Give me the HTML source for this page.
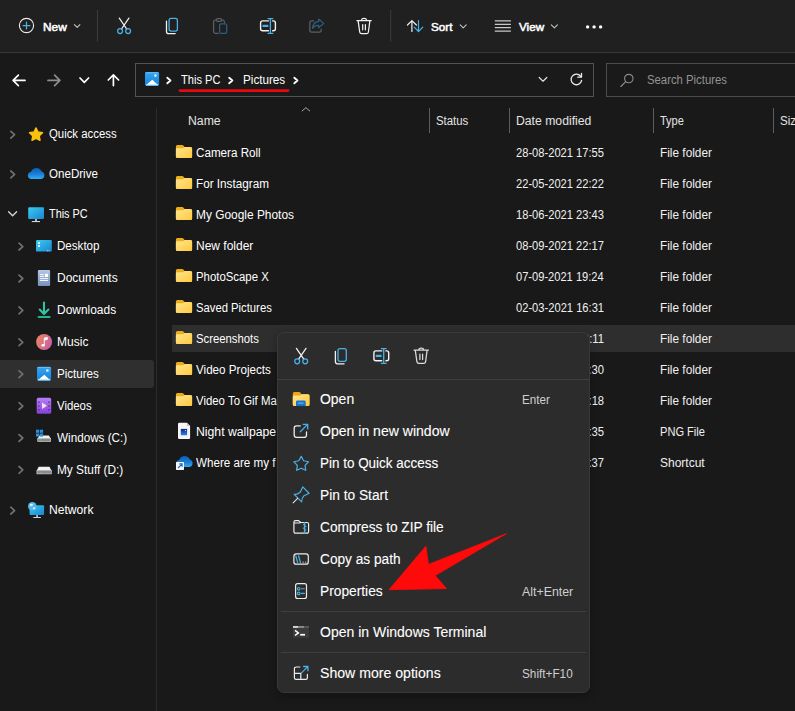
<!DOCTYPE html>
<html><head><meta charset="utf-8"><title>Pictures</title>
<style>
*{box-sizing:border-box;margin:0;padding:0}
html,body{width:795px;height:711px;overflow:hidden;background:#191919;font-family:"Liberation Sans",sans-serif;color:#fff}
body{position:relative}
.t{position:absolute;white-space:pre;line-height:1;transform-origin:0 0}
.box{position:absolute}
svg.ov{position:absolute;left:0;top:0;width:795px;height:711px;overflow:hidden}
#toolbar{left:0;top:0;width:795px;height:52px;background:#202020}
#tbline{left:0;top:52px;width:795px;height:1px;background:#383838}
#addr{left:135px;top:63px;width:459px;height:34px;border:1px solid #535353;background:#1a1a1a}
#search{left:606px;top:63px;width:200px;height:34px;border:1px solid #4d4d4d;background:#1a1a1a}
#sidesel{left:0;top:360px;width:154px;height:28px;background:#2f2f2f;border-radius:0 3px 3px 0}
#sideline{left:156px;top:108px;width:1px;height:603px;background:#2b2b2b}
#selrow{left:172px;top:325px;width:630px;height:27px;background:#2e2e2e}
.cs{position:absolute;top:108px;width:1px;height:25px;background:#5c5c5c}
#menu{left:277px;top:332px;width:313px;height:361px;background:#2c2c2c;border:1px solid #393939;border-radius:7px;box-shadow:0 3px 8px rgba(0,0,0,.28)}
.ms{position:absolute;left:281px;width:305px;height:1px;background:#3f3f3f}
</style></head><body>
<div class="box" id="toolbar"></div><div class="box" id="tbline"></div>
<div class="box" id="addr"></div><div class="box" id="search"></div>
<div class="box" id="sidesel"></div><div class="box" id="sideline"></div>
<div class="box" id="selrow"></div>
<div class="cs" style="left:429px"></div><div class="cs" style="left:509px"></div><div class="cs" style="left:653px"></div><div class="cs" style="left:773px"></div>
<span class="t" style="left:43.00px;top:22px;font-size:11px;color:#ffffff;-webkit-text-stroke:0.5px #ffffff;transform:scaleX(1.0814)">New</span>
<span class="t" style="left:431.00px;top:22px;font-size:11px;color:#ffffff;-webkit-text-stroke:0.5px #ffffff;transform:scaleX(1.0628)">Sort</span>
<span class="t" style="left:519.00px;top:22px;font-size:11px;color:#ffffff;-webkit-text-stroke:0.5px #ffffff;transform:scaleX(1.0601)">View</span>
<span class="t" style="left:181.00px;top:74px;font-size:12px;color:#ffffff;transform:scaleX(0.9231)">This PC</span>
<span class="t" style="left:243.00px;top:74px;font-size:12px;color:#ffffff;transform:scaleX(0.9736)">Pictures</span>
<span class="t" style="left:647.00px;top:74px;font-size:12px;color:#939393;transform:scaleX(0.9442)">Search Pictures</span>
<span class="t" style="left:188.00px;top:115px;font-size:12px;color:#e4e4e4;transform:scaleX(1.0212)">Name</span>
<span class="t" style="left:436.00px;top:115px;font-size:12px;color:#e4e4e4;transform:scaleX(0.9479)">Status</span>
<span class="t" style="left:516.00px;top:115px;font-size:12px;color:#e4e4e4;transform:scaleX(1.0176)">Date modified</span>
<span class="t" style="left:660.00px;top:115px;font-size:12px;color:#e4e4e4;transform:scaleX(0.9171)">Type</span>
<span class="t" style="left:780.00px;top:115px;font-size:12px;color:#e4e4e4;transform:scaleX(0.9681)">Size</span>
<span class="t" style="left:49.00px;top:128px;font-size:12px;color:#ffffff;transform:scaleX(0.9472)">Quick access</span>
<span class="t" style="left:49.00px;top:168px;font-size:12px;color:#ffffff;transform:scaleX(0.9654)">OneDrive</span>
<span class="t" style="left:49.00px;top:208px;font-size:12px;color:#ffffff;transform:scaleX(0.9049)">This PC</span>
<span class="t" style="left:57.00px;top:240px;font-size:12px;color:#ffffff;transform:scaleX(0.9657)">Desktop</span>
<span class="t" style="left:57.00px;top:272px;font-size:12px;color:#ffffff;transform:scaleX(0.9995)">Documents</span>
<span class="t" style="left:57.00px;top:304px;font-size:12px;color:#ffffff;transform:scaleX(0.9958)">Downloads</span>
<span class="t" style="left:57.00px;top:336px;font-size:12px;color:#ffffff;transform:scaleX(1.0034)">Music</span>
<span class="t" style="left:57.00px;top:368px;font-size:12px;color:#ffffff;transform:scaleX(0.9655)">Pictures</span>
<span class="t" style="left:57.00px;top:400px;font-size:12px;color:#ffffff;transform:scaleX(0.9503)">Videos</span>
<span class="t" style="left:57.00px;top:432px;font-size:12px;color:#ffffff;transform:scaleX(0.9752)">Windows (C:)</span>
<span class="t" style="left:57.00px;top:464px;font-size:12px;color:#ffffff;transform:scaleX(0.9877)">My Stuff (D:)</span>
<span class="t" style="left:49.00px;top:504px;font-size:12px;color:#ffffff;transform:scaleX(1.0098)">Network</span>
<span class="t" style="left:196.00px;top:147px;font-size:12px;color:#ffffff;transform:scaleX(0.9703)">Camera Roll</span>
<span class="t" style="left:516.00px;top:147px;font-size:12px;color:#f0f0f0;transform:scaleX(0.9288)">28-08-2021 17:55</span>
<span class="t" style="left:660.00px;top:147px;font-size:12px;color:#f0f0f0;transform:scaleX(0.9860)">File folder</span>
<span class="t" style="left:196.00px;top:178px;font-size:12px;color:#ffffff;transform:scaleX(0.9760)">For Instagram</span>
<span class="t" style="left:516.00px;top:178px;font-size:12px;color:#f0f0f0;transform:scaleX(0.9279)">22-05-2021 22:22</span>
<span class="t" style="left:660.00px;top:178px;font-size:12px;color:#f0f0f0;transform:scaleX(0.9860)">File folder</span>
<span class="t" style="left:196.00px;top:209px;font-size:12px;color:#ffffff;transform:scaleX(0.9928)">My Google Photos</span>
<span class="t" style="left:516.00px;top:209px;font-size:12px;color:#f0f0f0;transform:scaleX(0.9287)">18-06-2021 23:43</span>
<span class="t" style="left:660.00px;top:209px;font-size:12px;color:#f0f0f0;transform:scaleX(0.9860)">File folder</span>
<span class="t" style="left:196.00px;top:240px;font-size:12px;color:#ffffff;transform:scaleX(1.0001)">New folder</span>
<span class="t" style="left:516.00px;top:240px;font-size:12px;color:#f0f0f0;transform:scaleX(0.9279)">08-09-2021 22:17</span>
<span class="t" style="left:660.00px;top:240px;font-size:12px;color:#f0f0f0;transform:scaleX(0.9860)">File folder</span>
<span class="t" style="left:196.00px;top:271px;font-size:12px;color:#ffffff;transform:scaleX(0.9484)">PhotoScape X</span>
<span class="t" style="left:516.00px;top:271px;font-size:12px;color:#f0f0f0;transform:scaleX(0.9253)">07-09-2021 19:24</span>
<span class="t" style="left:660.00px;top:271px;font-size:12px;color:#f0f0f0;transform:scaleX(0.9860)">File folder</span>
<span class="t" style="left:196.00px;top:302px;font-size:12px;color:#ffffff;transform:scaleX(0.9389)">Saved Pictures</span>
<span class="t" style="left:516.00px;top:302px;font-size:12px;color:#f0f0f0;transform:scaleX(0.9294)">02-03-2021 16:31</span>
<span class="t" style="left:660.00px;top:302px;font-size:12px;color:#f0f0f0;transform:scaleX(0.9860)">File folder</span>
<span class="t" style="left:196.00px;top:333px;font-size:12px;color:#ffffff;transform:scaleX(0.9431)">Screenshots</span>
<span class="t" style="left:516.00px;top:333px;font-size:12px;color:#f0f0f0;transform:scaleX(0.9370)">09-09-2021 12:11</span>
<span class="t" style="left:660.00px;top:333px;font-size:12px;color:#f0f0f0;transform:scaleX(0.9860)">File folder</span>
<span class="t" style="left:196.00px;top:364px;font-size:12px;color:#ffffff;transform:scaleX(0.9702)">Video Projects</span>
<span class="t" style="left:516.00px;top:364px;font-size:12px;color:#f0f0f0;transform:scaleX(0.9367)">11-07-2021 20:30</span>
<span class="t" style="left:660.00px;top:364px;font-size:12px;color:#f0f0f0;transform:scaleX(0.9860)">File folder</span>
<span class="t" style="left:196.00px;top:395px;font-size:12px;color:#ffffff;transform:scaleX(0.9504)">Video To Gif Ma</span>
<span class="t" style="left:516.00px;top:395px;font-size:12px;color:#f0f0f0;transform:scaleX(0.9295)">05-08-2021 15:18</span>
<span class="t" style="left:660.00px;top:395px;font-size:12px;color:#f0f0f0;transform:scaleX(0.9860)">File folder</span>
<span class="t" style="left:196.00px;top:426px;font-size:12px;color:#ffffff;transform:scaleX(1.0181)">Night wallpape</span>
<span class="t" style="left:516.00px;top:426px;font-size:12px;color:#f0f0f0;transform:scaleX(0.9380)">09-09-2021 11:35</span>
<span class="t" style="left:660.00px;top:426px;font-size:12px;color:#f0f0f0;transform:scaleX(0.9237)">PNG File</span>
<span class="t" style="left:196.00px;top:457px;font-size:12px;color:#ffffff;transform:scaleX(0.9693)">Where are my f</span>
<span class="t" style="left:516.00px;top:457px;font-size:12px;color:#f0f0f0;transform:scaleX(0.9279)">24-07-2021 18:37</span>
<span class="t" style="left:660.00px;top:457px;font-size:12px;color:#f0f0f0;transform:scaleX(0.9998)">Shortcut</span>
<svg class="ov" viewBox="0 0 795 711">
<defs>
<linearGradient id="gFold" x1="0" y1="0" x2="1" y2="1"><stop offset="0" stop-color="#ffe58f"/><stop offset="1" stop-color="#ffc93f"/></linearGradient>
<linearGradient id="gPic" x1="0" y1="0" x2="0" y2="1"><stop offset="0" stop-color="#38a6f2"/><stop offset="1" stop-color="#1680d8"/></linearGradient>
<linearGradient id="gMon" x1="0" y1="0" x2="1" y2="1"><stop offset="0" stop-color="#3accf0"/><stop offset="1" stop-color="#1a84d2"/></linearGradient>
<linearGradient id="gDoc" x1="0" y1="0" x2="0" y2="1"><stop offset="0" stop-color="#b4c7e6"/><stop offset="1" stop-color="#7690be"/></linearGradient>
<linearGradient id="gMus" x1="0" y1="0" x2="1" y2="0.4"><stop offset="0" stop-color="#ee8a56"/><stop offset="1" stop-color="#cc60a2"/></linearGradient>
<linearGradient id="gVid" x1="0" y1="0" x2="0" y2="1"><stop offset="0" stop-color="#b880f6"/><stop offset="1" stop-color="#8640d2"/></linearGradient>
<linearGradient id="gCloud" x1="0" y1="0" x2="0" y2="1"><stop offset="0" stop-color="#0f5db4"/><stop offset="0.55" stop-color="#1a7ed6"/><stop offset="1" stop-color="#35aef2"/></linearGradient>
<linearGradient id="gImg" x1="0" y1="0" x2="0" y2="1"><stop offset="0" stop-color="#0a2688"/><stop offset="1" stop-color="#3088ea"/></linearGradient>
<linearGradient id="gDl" x1="0" y1="0" x2="0" y2="1"><stop offset="0" stop-color="#3bd0ae"/><stop offset="1" stop-color="#1fae8a"/></linearGradient>
<g id="iFolder">
<path d="M0 1.5Q0 0 1.5 0H6.2Q7 0 7.5.6L8.6 2.1H14.7Q16.2 2.1 16.2 3.6V11.7Q16.2 13.2 14.7 13.2H1.5Q0 13.2 0 11.7Z" fill="#ecae18"/>
<path d="M0 4.5Q0 3.4 1.1 3.4H6.5Q7.2 3.4 7.7 3L8.7 2.1H14.7Q16.2 2.1 16.2 3.6V11.7Q16.2 13.2 14.7 13.2H1.5Q0 13.2 0 11.7Z" fill="url(#gFold)"/>
</g>
<g id="iPic">
<rect x="0" y="0" width="14.1" height="14" rx="1.6" fill="url(#gPic)"/>
<rect x="0.4" y="0.3" width="13.3" height="1" rx=".5" fill="#6cc6f8" opacity=".8"/>
<path d="M1.1 13.1L7.3 7.9L13.1 13.1Z" fill="#fff"/>
<rect x="0.8" y="12.5" width="12.5" height="1.1" rx=".4" fill="#a6e8ff"/>
<circle cx="10.4" cy="3.7" r="1.3" fill="#d4f3ff"/>
</g>
<g id="iScis" fill="none" stroke-width="1.25" stroke-linecap="round">
<path d="M119.3 18.1L126.7 29M128.9 18.1L121.5 29" stroke="#f2f2f2"/>
<circle cx="120.1" cy="31.1" r="2.45" stroke="#4ab1e6"/><circle cx="128.1" cy="31.1" r="2.45" stroke="#4ab1e6"/>
</g>
<g id="iCopy" fill="none" stroke-width="1.3" stroke-linecap="round">
<path d="M166.5 21.2V31.4a2.2 2.2 0 0 0 2.2 2.2H175.2" stroke="#f2f2f2"/>
<rect x="169.1" y="18.4" width="8.3" height="12.7" rx="2" stroke="#4ab1e6"/>
</g>
<g id="iRen" fill="none" stroke-linecap="round">
<path d="M268.4 20.9H262.6a2 2 0 0 0-2 2V28.8a2 2 0 0 0 2 2H268.4M272.6 20.9H273.4a2 2 0 0 1 2 2V28.8a2 2 0 0 1-2 2H272.6" stroke="#f2f2f2" stroke-width="1.4"/>
<path d="M270.4 18.7V33.3M268.1 18.6H272.8M268.1 33.4H272.8" stroke="#4ab1e6" stroke-width="1.3"/>
<path d="M262.5 25.9H268.3" stroke="#4ab1e6" stroke-width="2.2" stroke-linecap="butt"/>
</g>
<g id="iTrash" fill="none" stroke-width="1.25" stroke-linecap="round" stroke-linejoin="round">
<path d="M356.9 20.5H371.2M361.4 20.3a2.7 2.3 0 0 1 5.3 0M358.1 20.7L359.7 32a2 2 0 0 0 2 1.7H366.4a2 2 0 0 0 2-1.7L369.9 20.7M362.7 24.5V29.8M365.4 24.5V29.8"/>
</g>
<path id="pCloud" d="M31.5 179C29.3 179 27.8 177.4 27.8 175.5C27.8 173.6 29.2 172.2 31 172C31.8 169.6 33.9 168 36.4 168C38.8 168 40.8 169.4 41.6 171.5C43.3 171.8 44.4 173.3 44.4 175.2C44.4 177.3 42.8 179 40.7 179Z"/>
</defs>
<circle cx="26.5" cy="25.5" r="7.1" fill="none" stroke="#ececec" stroke-width="1.1"/>
<path d="M23.1 25.5H29.9M26.5 22.1V28.9" stroke="#4ab1e6" stroke-width="1.25" stroke-linecap="round"/>
<polyline points="74.4,24.7 77.15,27.4 79.9,24.7" fill="none" stroke="#c4c4c4" stroke-width="1.1" stroke-linecap="round" stroke-linejoin="round"/>
<rect x="97" y="10" width="1" height="31.5" fill="#3c3c3c"/>
<use href="#iScis"/>
<use href="#iCopy"/>
<g fill="none" stroke-width="1.25" stroke-linecap="round"><path d="M218.3 33.3H215.4a1.8 1.8 0 0 1-1.8-1.8V21.9a1.8 1.8 0 0 1 1.8-1.8H216.4M221.6 20.1H222.6a1.8 1.8 0 0 1 1.8 1.8V22.4" stroke="#5e5e5e"/><rect x="216.4" y="18.6" width="5.2" height="2.8" rx="1.3" stroke="#5e5e5e"/><rect x="219.6" y="23.9" width="7.1" height="9.5" rx="1.6" stroke="#295f80"/></g>
<use href="#iRen"/>
<g fill="none" stroke-width="1.25" stroke-linecap="round" stroke-linejoin="round"><path d="M313.6 20.9H311.7a1.9 1.9 0 0 0-1.9 1.9V30.3a1.9 1.9 0 0 0 1.9 1.9H319.3a1.9 1.9 0 0 0 1.9-1.9V29.2" stroke="#5e5e5e"/><path d="M318.7 19L323.7 23.4L318.7 27.8V25.4C315.6 25.2 313.7 26.2 312.4 28.4C312.7 24.6 314.9 21.9 318.7 21.4Z" stroke="#295f80"/></g>
<use href="#iTrash" stroke="#f2f2f2"/>
<rect x="390.2" y="10" width="1" height="31.5" fill="#3c3c3c"/>
<g fill="none" stroke-width="1.2" stroke-linecap="round" stroke-linejoin="round"><path d="M411.9 31.5V20.9M407.5 25L411.9 20.6L416.4 25" stroke="#f2f2f2"/><path d="M418.5 20.6V31.3M414.2 27.2L418.5 31.5L422.8 27.2" stroke="#4ab1e6"/></g>
<polyline points="460.2,24.9 463.2,27.8 466.2,24.9" fill="none" stroke="#c4c4c4" stroke-width="1.1" stroke-linecap="round" stroke-linejoin="round"/>
<path d="M494.8 20.9H510.9M494.8 24.3H510.9M494.8 27.7H510.9M494.8 31.1H510.9" stroke="#f2f2f2" stroke-width="1"/>
<polyline points="551.3,24.9 554.3499999999999,27.8 557.4,24.9" fill="none" stroke="#c4c4c4" stroke-width="1.1" stroke-linecap="round" stroke-linejoin="round"/>
<circle cx="587.6" cy="26.9" r="1.7" fill="#fff"/><circle cx="594.1" cy="26.9" r="1.7" fill="#fff"/><circle cx="600.6" cy="26.9" r="1.7" fill="#fff"/>
<g fill="none" stroke-width="1.7" stroke-linecap="round" stroke-linejoin="round"><path d="M25 80.4H13.3M18.4 75.2L13.1 80.4L18.4 85.6" stroke="#fff"/><path d="M48 80.4H59.7M54.6 75.2L59.9 80.4L54.6 85.6" stroke="#8e8e8e"/><path d="M80 78L84.3 82.3L88.6 78" stroke="#fff"/><path d="M113.4 85.6V75.1M108.3 80L113.4 74.9L118.6 80" stroke="#fff"/></g>
<use href="#iPic" x="145" y="71.9"/>
<polyline points="167.3,77.7 170.5,80.5 167.3,83.3" fill="none" stroke="#fff" stroke-width="1.8" stroke-linecap="round" stroke-linejoin="round"/>
<polyline points="229.20000000000002,77.7 232.4,80.5 229.20000000000002,83.3" fill="none" stroke="#fff" stroke-width="1.8" stroke-linecap="round" stroke-linejoin="round"/>
<polyline points="294.3,77.7 297.5,80.5 294.3,83.3" fill="none" stroke="#fff" stroke-width="1.8" stroke-linecap="round" stroke-linejoin="round"/>
<polyline points="539.2,77.5 543.0,81.2 546.8,77.5" fill="none" stroke="#e0e0e0" stroke-width="1.2" stroke-linecap="round" stroke-linejoin="round"/>
<g fill="none" stroke="#ececec" stroke-width="1.3" stroke-linecap="round" stroke-linejoin="round"><path d="M580.9 76.6A5.3 5.3 0 1 0 581.6 80.4"/><path d="M581.5 73.3V77.1H577.7"/></g>
<g fill="none" stroke="#8c8c8c" stroke-width="1.15" stroke-linecap="round"><circle cx="628.8" cy="78.5" r="4.2"/><path d="M625.7 81.7L620.9 86.5"/></g>
<path d="M180 90.6H288" stroke="#e6090f" stroke-width="2.8" stroke-linecap="round"/>
<polyline points="301.8,111.2 305.9,107.7 310,111.2" fill="none" stroke="#a8a8a8" stroke-width="1"/>
<polyline points="10.8,131.29999999999998 14.6,134.7 10.8,138.1" fill="none" stroke="#707070" stroke-width="1.7" stroke-linecap="round" stroke-linejoin="round"/>
<polyline points="10.8,171.0 14.6,174.4 10.8,177.8" fill="none" stroke="#707070" stroke-width="1.7" stroke-linecap="round" stroke-linejoin="round"/>
<polyline points="8.6,211.7 12.600000000000001,215.7 16.6,211.7" fill="none" stroke="#d4d4d4" stroke-width="1.4" stroke-linecap="round" stroke-linejoin="round"/>
<polyline points="19,243.2 22.8,246.6 19,250.0" fill="none" stroke="#707070" stroke-width="1.7" stroke-linecap="round" stroke-linejoin="round"/>
<polyline points="19,275.1 22.8,278.5 19,281.9" fill="none" stroke="#707070" stroke-width="1.7" stroke-linecap="round" stroke-linejoin="round"/>
<polyline points="19,307.0 22.8,310.4 19,313.79999999999995" fill="none" stroke="#707070" stroke-width="1.7" stroke-linecap="round" stroke-linejoin="round"/>
<polyline points="19,338.9 22.8,342.29999999999995 19,345.69999999999993" fill="none" stroke="#707070" stroke-width="1.7" stroke-linecap="round" stroke-linejoin="round"/>
<polyline points="19,370.8 22.8,374.2 19,377.59999999999997" fill="none" stroke="#707070" stroke-width="1.7" stroke-linecap="round" stroke-linejoin="round"/>
<polyline points="19,402.70000000000005 22.8,406.1 19,409.5" fill="none" stroke="#707070" stroke-width="1.7" stroke-linecap="round" stroke-linejoin="round"/>
<polyline points="19,434.6 22.8,438.0 19,441.4" fill="none" stroke="#707070" stroke-width="1.7" stroke-linecap="round" stroke-linejoin="round"/>
<polyline points="19,466.5 22.8,469.9 19,473.29999999999995" fill="none" stroke="#707070" stroke-width="1.7" stroke-linecap="round" stroke-linejoin="round"/>
<polyline points="10.8,507.20000000000005 14.6,510.6 10.8,514.0" fill="none" stroke="#707070" stroke-width="1.7" stroke-linecap="round" stroke-linejoin="round"/>
<polygon points="36.00,127.90 38.06,131.97 42.56,132.67 39.33,135.88 40.06,140.38 36.00,138.30 31.94,140.38 32.67,135.88 29.44,132.67 33.94,131.97" fill="#fbc20e" stroke="#fbc20e" stroke-width="1.3" stroke-linejoin="round"/>
<use href="#pCloud" fill="url(#gCloud)"/>
<rect x="28.2" y="207.2" width="15.8" height="11.8" rx="1" fill="url(#gMon)"/><rect x="35" y="219" width="2" height="2.2" fill="#aebac4"/><rect x="31.8" y="221" width="8.2" height="1.1" fill="#cdd6dc"/>
<rect x="36" y="240.1" width="15.8" height="11.5" rx="1.2" fill="url(#gMon)"/><rect x="38.1" y="242.2" width="1.8" height="1.8" fill="#fff"/><rect x="38.1" y="245.1" width="1.8" height="1.8" fill="#fff"/><circle cx="47.3" cy="250.7" r=".5" fill="#fff"/><circle cx="49.1" cy="250.7" r=".5" fill="#fff"/>
<rect x="37.9" y="270" width="12.2" height="16" rx="1" fill="url(#gDoc)"/><g fill="#fff"><rect x="40" y="274.2" width="3.7" height=".9"/><rect x="40" y="276" width="3.7" height=".9"/><rect x="44.8" y="273.8" width="3.2" height="3.2"/><rect x="40" y="278.2" width="8" height=".9"/><rect x="40" y="280.1" width="8" height=".9"/></g>
<g fill="none" stroke="url(#gDl)" stroke-linecap="round" stroke-linejoin="round"><path d="M44 302.6V313M39.7 309.6L44 313.9L48.4 309.6" stroke-width="2.1" stroke="#2ec6a2"/><path d="M38.6 317H49.6" stroke-width="2.1" stroke="#22b28e"/></g>
<circle cx="44.1" cy="342" r="8" fill="url(#gMus)"/><ellipse cx="43.1" cy="345.3" rx="1.7" ry="1.4" fill="#fff"/><path d="M44.3 345.3V338.1L47.3 337.4V339.4L44.3 340.1" fill="#fff" stroke="#fff" stroke-width=".9" stroke-linejoin="round"/>
<use href="#iPic" x="37" y="366.8"/>
<rect x="36.7" y="397.8" width="14.5" height="16" rx="1.6" fill="url(#gVid)"/>
<rect x="38.2" y="401.4" width="1.4" height="1.6" rx=".3" fill="#5a2aa4"/><rect x="48.3" y="401.4" width="1.4" height="1.6" rx=".3" fill="#5a2aa4"/>
<rect x="38.2" y="405.2" width="1.4" height="1.6" rx=".3" fill="#5a2aa4"/><rect x="48.3" y="405.2" width="1.4" height="1.6" rx=".3" fill="#5a2aa4"/>
<rect x="38.2" y="409" width="1.4" height="1.6" rx=".3" fill="#5a2aa4"/><rect x="48.3" y="409" width="1.4" height="1.6" rx=".3" fill="#5a2aa4"/>
<polygon points="42,402.6 47,405.8 42,409" fill="#f4e0ff"/>
<polygon points="39.5,435.6 48.9,435.6 50.7,438.5 37.7,438.5" fill="#f0f0f0"/><rect x="37.7" y="438.5" width="13" height="3.1" fill="#8a8a8a" stroke="#dadada" stroke-width=".6"/><circle cx="40.2" cy="440" r=".65" fill="#45e060"/>
<rect x="36" y="429.7" width="3.2" height="3.1" fill="#2a90e2"/>
<rect x="39.9" y="429.7" width="3.2" height="3.1" fill="#2a90e2"/>
<rect x="36" y="433.5" width="3.2" height="3.1" fill="#2a90e2"/>
<rect x="39.9" y="433.5" width="3.2" height="3.1" fill="#2a90e2"/>
<polygon points="38.7,466.8 49.5,466.8 51.3,470.3 36.9,470.3" fill="#f2f2f2"/><rect x="36.9" y="470.3" width="14.4" height="3.6" fill="#8a8a8a" stroke="#e0e0e0" stroke-width=".6"/><circle cx="40.4" cy="472.1" r=".65" fill="#45e060"/>
<rect x="29.6" y="505.2" width="14.5" height="9.8" rx="1" fill="url(#gMon)"/><rect x="36.2" y="515" width="1.8" height="2.1" fill="#aebac4"/><rect x="33.3" y="517" width="7.6" height="1" fill="#cdd6dc"/><circle cx="32.3" cy="506.2" r="4.3" fill="#56b6ec"/><path d="M29.6 504.2Q31.6 503 33.4 504.4Q32.6 506 30.6 506.4ZM33 507.4Q34.8 506.6 35.6 508.2Q34.6 509.6 33.2 509.2Z" fill="#dff3ff"/>
<use href="#iFolder" x="175.9" y="144.9"/>
<use href="#iFolder" x="175.9" y="175.9"/>
<use href="#iFolder" x="175.9" y="206.9"/>
<use href="#iFolder" x="175.9" y="237.9"/>
<use href="#iFolder" x="175.9" y="268.9"/>
<use href="#iFolder" x="175.9" y="299.9"/>
<use href="#iFolder" x="175.9" y="330.9"/>
<use href="#iFolder" x="175.9" y="361.9"/>
<use href="#iFolder" x="175.9" y="392.9"/>
<path d="M179.2 422.8H186.9L190.1 426V437.8a1.2 1.2 0 0 1-1.2 1.2H179.2a1.2 1.2 0 0 1-1.2-1.2V424a1.2 1.2 0 0 1 1.2-1.2Z" fill="#f6f6f6"/><path d="M186.9 422.8V426H190.1Z" fill="#c4c4c4"/><rect x="180.8" y="428.9" width="6.3" height="6.4" fill="url(#gImg)"/><circle cx="185.5" cy="430.5" r=".6" fill="#fff"/>
<use href="#pCloud" fill="url(#gCloud)" transform="translate(148.2 288.1)"/><rect x="176" y="462.1" width="8" height="7.8" rx=".6" fill="#f6f6f6"/><path d="M178 468L181.9 464.1M179.2 463.9H182.1V466.8" fill="none" stroke="#1a6fd2" stroke-width="1.2"/>
</svg>
<div class="box" id="menu"></div>
<div class="ms" style="top:379px;left:278px;width:311px"></div><div class="ms" style="top:611px"></div><div class="ms" style="top:652px"></div>
<span class="t" style="left:320.00px;top:392px;font-size:14px;color:#ffffff;-webkit-text-stroke:0.1px #ffffff;transform:scaleX(0.9972)">Open</span>
<span class="t" style="left:320.00px;top:424px;font-size:14px;color:#ffffff;-webkit-text-stroke:0.1px #ffffff;transform:scaleX(1.0032)">Open in new window</span>
<span class="t" style="left:320.00px;top:456px;font-size:14px;color:#ffffff;-webkit-text-stroke:0.1px #ffffff;transform:scaleX(0.9611)">Pin to Quick access</span>
<span class="t" style="left:320.00px;top:488px;font-size:14px;color:#ffffff;-webkit-text-stroke:0.1px #ffffff;transform:scaleX(0.9814)">Pin to Start</span>
<span class="t" style="left:320.00px;top:520px;font-size:14px;color:#ffffff;-webkit-text-stroke:0.1px #ffffff;transform:scaleX(0.9773)">Compress to ZIP file</span>
<span class="t" style="left:320.00px;top:552px;font-size:14px;color:#ffffff;-webkit-text-stroke:0.1px #ffffff;transform:scaleX(0.9768)">Copy as path</span>
<span class="t" style="left:320.00px;top:584px;font-size:14px;color:#ffffff;-webkit-text-stroke:0.1px #ffffff;transform:scaleX(0.9820)">Properties</span>
<span class="t" style="left:320.00px;top:625px;font-size:14px;color:#ffffff;-webkit-text-stroke:0.1px #ffffff;transform:scaleX(1.0003)">Open in Windows Terminal</span>
<span class="t" style="left:320.00px;top:666px;font-size:14px;color:#ffffff;-webkit-text-stroke:0.1px #ffffff;transform:scaleX(1.0070)">Show more options</span>
<span class="t" style="left:522.00px;top:394px;font-size:12px;color:#cfcfcf;transform:scaleX(0.9695)">Enter</span>
<span class="t" style="left:522.00px;top:586px;font-size:12px;color:#cfcfcf;transform:scaleX(1.0300)">Alt+Enter</span>
<span class="t" style="left:522.00px;top:668px;font-size:12px;color:#cfcfcf;transform:scaleX(0.9807)">Shift+F10</span>
<svg class="ov" viewBox="0 0 795 711">
<use href="#iScis" transform="translate(177.1 330.2)"/>
<use href="#iCopy" transform="translate(168.9 330.2)"/>
<use href="#iRen" transform="translate(113.3 330)"/>
<use href="#iTrash" stroke="#dcdcdc" transform="translate(57.2 329.7)"/>
<path d="M292.8 393.4a1.5 1.5 0 0 1 1.5-1.5H299.2Q299.9 391.9 300.3 392.5L301.4 394.3H308a1.5 1.5 0 0 1 1.5 1.5V404.6a1.5 1.5 0 0 1-1.5 1.5H294.3a1.5 1.5 0 0 1-1.5-1.5Z" fill="#eca514"/>
<path d="M292.8 396.7a1.1 1.1 0 0 1 1.1-1.1H299.6Q300.3 395.6 300.7 395.1L301.5 394.3H308a1.5 1.5 0 0 1 1.5 1.5V404.6a1.5 1.5 0 0 1-1.5 1.5H294.3a1.5 1.5 0 0 1-1.5-1.5Z" fill="url(#gFold)"/>
<path d="M296 406.1V402a1.4 1.4 0 0 1 1.4-1.4H304.3a1.4 1.4 0 0 1 1.4 1.4V406.1Z" fill="#1873cc"/><rect x="297.8" y="402.5" width="6" height="1.2" rx=".6" fill="#58b4f6"/>
<g fill="none" stroke-width="1.3" stroke-linecap="round" stroke-linejoin="round"><path d="M300.2 425.9H296.5a2.3 2.3 0 0 0-2.3 2.3V435.1a2.3 2.3 0 0 0 2.3 2.3H304.2a2.3 2.3 0 0 0 2.3-2.3V431.8" stroke="#ececec"/><path d="M300.3 431.7L307.6 424.4M303.2 424.4H307.7V428.9" stroke="#4ab1e6"/></g>
<polygon points="301.20,456.40 303.61,460.78 308.52,461.72 305.10,465.37 305.73,470.33 301.20,468.20 296.67,470.33 297.30,465.37 293.88,461.72 298.79,460.78" fill="none" stroke="#4ab1e6" stroke-width="1.2" stroke-linejoin="round"/>
<g transform="translate(299.9 496.1) rotate(45)" fill="none" stroke-linecap="round" stroke-linejoin="round"><path d="M-4.5 -8.5H4.5L2.6 -3.2Q2.8 .8 5.3 2.8H-5.3Q-2.8 .8 -2.6 -3.2Z" stroke="#4ab1e6" stroke-width="1.2"/><path d="M0 3.2V9.6" stroke="#e0e0e0" stroke-width="1.1"/></g>
<g fill="none" stroke-linecap="round" stroke-linejoin="round"><path d="M293.9 522.2a1.6 1.6 0 0 1 1.6-1.6H298.6L300.6 522.5H307a1.6 1.6 0 0 1 1.6 1.6V531.6a1.6 1.6 0 0 1-1.6 1.6H295.5a1.6 1.6 0 0 1-1.6-1.6ZM293.9 523H299.8L300.6 522.5" stroke="#ececec" stroke-width="1.2"/><path d="M304.6 522.7V533.1" stroke="#4ab1e6" stroke-width="1.5"/><path d="M303.2 524.6H304.6M304.6 526.4H306M303.2 528.2H304.6M304.6 530H306" stroke="#4ab1e6" stroke-width="1"/></g>
<g fill="none" stroke-linecap="round"><rect x="293.9" y="553.8" width="14.4" height="10.4" rx="2.3" stroke="#ececec" stroke-width="1.2"/><path d="M295.8 555.8L297.6 562.3M298.6 555.8L300.4 562.3" stroke="#4ab1e6" stroke-width="1.3"/></g><circle cx="303.1" cy="562.1" r=".7" fill="#d8d8d8"/><circle cx="305.7" cy="562.1" r=".7" fill="#d8d8d8"/>
<g fill="none" stroke-linecap="round"><rect x="295.6" y="583.7" width="10.9" height="14.8" rx="2" stroke="#ececec" stroke-width="1.2"/><circle cx="298.7" cy="588.8" r="1.3" stroke="#4ab1e6" stroke-width="1.1"/><circle cx="298.7" cy="593.4" r="1.3" stroke="#4ab1e6" stroke-width="1.1"/><path d="M301.4 588.8H304.4M301.4 593.4H304.4" stroke="#4ab1e6" stroke-width="1.1"/></g>
<rect x="293" y="626" width="16" height="11.8" rx=".6" fill="#3b3b3b"/><rect x="293" y="626" width="5" height="1.9" fill="#d6d6d6"/><rect x="298" y="626" width="6.2" height="1.9" fill="#8c8c8c"/><rect x="304.2" y="626" width="4.8" height="1.9" fill="#5a5a5a"/><path d="M295 630.3L298.4 632.9L295 635.5" fill="none" stroke="#fff" stroke-width="1.5"/><rect x="300.2" y="633.9" width="4.8" height="1.7" fill="#fff"/>
<g fill="none" stroke-width="1.2" stroke-linecap="round" stroke-linejoin="round"><path d="M299.8 667H296.1a1.7 1.7 0 0 0-1.7 1.7V677.7a1.7 1.7 0 0 0 1.7 1.7H305.7a1.7 1.7 0 0 0 1.7-1.7V674.4M294.4 673.4H300.8V679.4" stroke="#ececec"/><path d="M301.5 672.9L307.8 666.6M303.6 666.5H307.9V670.8" stroke="#4ab1e6" stroke-width="1.3"/></g>
<polygon points="389,589.7 425.9,546.2 428.4,564.4 506.3,533.7 435.2,575.6 446.5,588.6" fill="#fe0a0a" stroke="#fe0a0a" stroke-width=".8" stroke-linejoin="round"/>
</svg>
</body></html>
